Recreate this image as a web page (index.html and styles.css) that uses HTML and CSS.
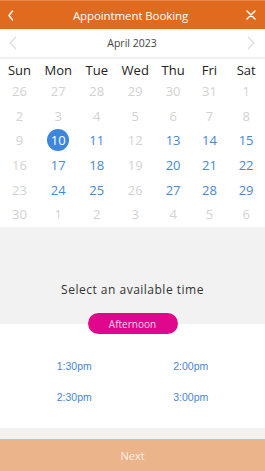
FILE: index.html
```html
<!DOCTYPE html>
<html>
<head>
<meta charset="utf-8">
<link rel="stylesheet" href="styles.css">
</head>
<body>
<div class="app">
  <header class="topbar">
    <svg class="tb-icon" width="8" height="11" viewBox="0 0 8 11"><path d="M5.5 1 L2 5.5 L5.5 10" fill="none" stroke="#fff" stroke-width="1.5" stroke-linecap="round" stroke-linejoin="round"/></svg>
    <div class="title">Appointment Booking</div>
    <svg class="tb-icon" width="10" height="10" viewBox="0 0 10 10"><path d="M1 1 L9 9 M9 1 L1 9" fill="none" stroke="#fff" stroke-width="1.5" stroke-linecap="round"/></svg>
  </header>
  <div class="monthbar">
    <svg width="10" height="14" viewBox="0 0 10 14"><path d="M8 1 L2 7 L8 13" fill="none" stroke="#dcdcdc" stroke-width="1.2"/></svg>
    <div class="month">April 2023</div>
    <svg width="10" height="14" viewBox="0 0 10 14"><path d="M2 1 L8 7 L2 13" fill="none" stroke="#dcdcdc" stroke-width="1.2"/></svg>
  </div>
  <div class="cal">
    <div class="wd">Sun</div><div class="wd">Mon</div><div class="wd">Tue</div><div class="wd">Wed</div><div class="wd">Thu</div><div class="wd">Fri</div><div class="wd">Sat</div>
    <div class="d off">26</div><div class="d off">27</div><div class="d off">28</div><div class="d off">29</div><div class="d off">30</div><div class="d off">31</div><div class="d off">1</div>
    <div class="d off">2</div><div class="d off">3</div><div class="d off">4</div><div class="d off">5</div><div class="d off">6</div><div class="d off">7</div><div class="d off">8</div>
    <div class="d off">9</div><div class="d"><span class="sel">10</span></div><div class="d on">11</div><div class="d off">12</div><div class="d on">13</div><div class="d on">14</div><div class="d on">15</div>
    <div class="d off">16</div><div class="d on">17</div><div class="d on">18</div><div class="d off">19</div><div class="d on">20</div><div class="d on">21</div><div class="d on">22</div>
    <div class="d off">23</div><div class="d on">24</div><div class="d on">25</div><div class="d off">26</div><div class="d on">27</div><div class="d on">28</div><div class="d on">29</div>
    <div class="d off">30</div><div class="d off">1</div><div class="d off">2</div><div class="d off">3</div><div class="d off">4</div><div class="d off">5</div><div class="d off">6</div>
  </div>
  <section class="select">
    <div class="select-title">Select an available time</div>
  </section>
  <div class="tabrow"><div class="tab">Afternoon</div></div>
  <div class="times">
    <div class="time">1:30pm</div><div class="time">2:00pm</div>
    <div class="time">2:30pm</div><div class="time">3:00pm</div>
  </div>
  <div class="spacer"></div>
  <div class="next">Next</div>
</div>
</body>
</html>
```
FILE: styles.css
```css
* { box-sizing: border-box; }
html, body { margin: 0; padding: 0; background: #fff; }
body { font-family: "Open Sans", "Noto Sans", sans-serif; }
.app { width: 265px; height: 471px; display: flex; flex-direction: column; overflow: hidden; }
.topbar {
  height: 29px; background: #e06a1e; display: flex; align-items: center;
  justify-content: space-between; padding: 0 9px 0 7px; border-top: 1px solid #e98a4c;
}
.title { color: #fff; font-size: 11.5px; letter-spacing: -0.1px; }
.tb-icon { display: block; }
.monthbar {
  height: 30px; display: flex; align-items: center; justify-content: space-between;
  padding: 0 9px 0 8px; border-bottom: 2px solid #f1f1f1;
}
.month { color: #444; font-size: 10.5px; }
.cal {
  display: grid;
  grid-template-columns: 39px 38.5px 38.5px 38.5px 37.25px 35.5px 37.75px;
  grid-template-rows: 19px repeat(6, 24.6px);
  padding-top: 1px;
  height: 168px;
}
.wd, .d { display: flex; align-items: center; justify-content: center; font-size: 13px; }
.wd { color: #222; }
.d.off { color: #d2d2d2; }
.d.on { color: #4a88d3; }
.sel {
  width: 22px; height: 22px; border-radius: 50%; background: #3d86de; color: #fff;
  display: flex; align-items: center; justify-content: center; font-size: 13px;
}
.select { height: 97px; background: #f2f2f2; display: flex; align-items: flex-start; justify-content: center; padding-top: 54px; }
.select-title { color: #333; font-size: 12px; letter-spacing: 0.5px; }
.tabrow { display: flex; justify-content: center; margin-top: -11px; }
.tab {
  width: 90px; height: 21px; border-radius: 11px; background: #e0078c; color: #fbd3ea;
  font-size: 10px; display: flex; align-items: center; justify-content: center;
}
.times {
  display: grid; grid-template-columns: 1fr 1fr; grid-template-rows: 31px 31px;
  padding: 16px 16px 0 16px; height: 94px;
}
.time {
  display: flex; align-items: center; justify-content: center;
  font-family: "Liberation Sans", Arial, sans-serif; font-size: 10.5px; color: #4a86d2;
}
.spacer { height: 11px; background: #f2f2f2; }
.next {
  flex: 1; background: #ebb48a; color: #fdf0e4; font-size: 11px;
  display: flex; align-items: center; justify-content: center;
}
```
